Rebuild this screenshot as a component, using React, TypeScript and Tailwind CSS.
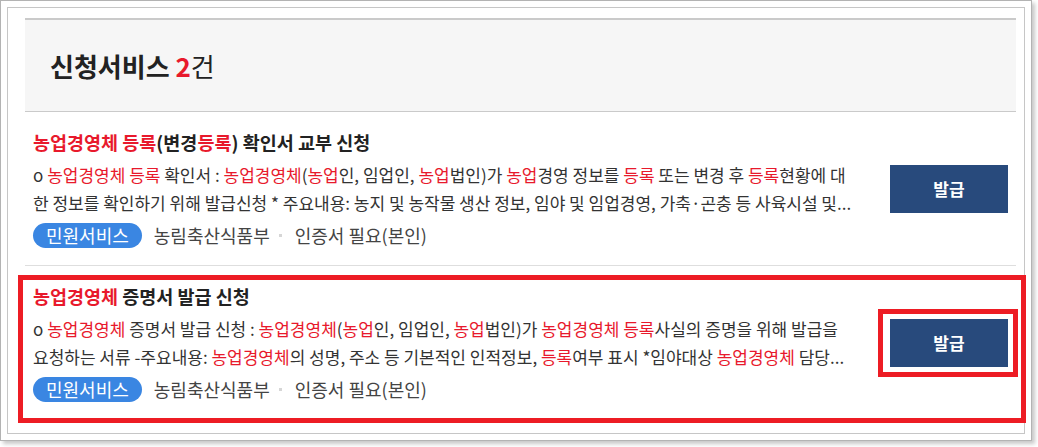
import React from 'react';

const font = { fontFamily: '"Noto Sans CJK KR", "Noto Sans", sans-serif' };

type Part = { t: string; red?: boolean };

function Rich({ parts }: { parts: Part[] }) {
  return (
    <>
      {parts.map((p, i) =>
        p.red ? (
          <span key={i} className="text-[#e8192c]">
            {p.t}
          </span>
        ) : (
          <span key={i}>{p.t}</span>
        )
      )}
    </>
  );
}

interface Service {
  id: number;
  title: Part[];
  lines: Part[][];
  highlighted?: boolean;
}

const services: Service[] = [
  {
    id: 1,
    title: [{ t: '농업경영체 등록', red: true }, { t: '(변경' }, { t: '등록', red: true }, { t: ') 확인서 교부 신청' }],
    lines: [
      [
        { t: 'o ' },
        { t: '농업경영체 등록', red: true },
        { t: ' 확인서 : ' },
        { t: '농업경영체', red: true },
        { t: '(' },
        { t: '농업', red: true },
        { t: '인, 임업인, ' },
        { t: '농업', red: true },
        { t: '법인)가 ' },
        { t: '농업', red: true },
        { t: '경영 정보를 ' },
        { t: '등록', red: true },
        { t: ' 또는 변경 후 ' },
        { t: '등록', red: true },
        { t: '현황에 대' },
      ],
      [{ t: '한 정보를 확인하기 위해 발급신청 * 주요내용: 농지 및 농작물 생산 정보, 임야 및 임업경영, 가축·곤충 등 사육시설 및...' }],
    ],
  },
  {
    id: 2,
    highlighted: true,
    title: [{ t: '농업경영체', red: true }, { t: ' 증명서 발급 신청' }],
    lines: [
      [
        { t: 'o ' },
        { t: '농업경영체', red: true },
        { t: ' 증명서 발급 신청 : ' },
        { t: '농업경영체', red: true },
        { t: '(' },
        { t: '농업', red: true },
        { t: '인, 임업인, ' },
        { t: '농업', red: true },
        { t: '법인)가 ' },
        { t: '농업경영체 등록', red: true },
        { t: '사실의 증명을 위해 발급을' },
      ],
      [
        { t: '요청하는 서류 -주요내용: ' },
        { t: '농업경영체', red: true },
        { t: '의 성명, 주소 등 기본적인 인적정보, ' },
        { t: '등록', red: true },
        { t: '여부 표시 *임야대상 ' },
        { t: '농업경영체', red: true },
        { t: ' 담당...' },
      ],
    ],
  },
];

function ServiceItem({ item, last }: { item: Service; last: boolean }) {
  return (
    <div className={`relative flex items-center h-[154px] pl-2 pr-2 ${last ? '' : 'border-b border-[#dedede]'}`}>
      {item.highlighted && (
        <div className="absolute -left-[7px] -right-[10px] top-[9px] h-[148px] border-[5px] border-[#ed1c24] pointer-events-none" />
      )}
      <div className="flex-1 min-w-0 pt-[1px]">
        <div className="text-[18.5px] leading-[24px] font-bold text-[#222] whitespace-nowrap">
          <Rich parts={item.title} />
        </div>
        <div className="mt-[7px] w-[836px] text-[17px] leading-[28px] text-[#333]">
          {item.lines.map((line, i) => (
            <div key={i} className="whitespace-nowrap overflow-hidden">
              <Rich parts={line} />
            </div>
          ))}
        </div>
        <div className="mt-[5px] flex items-center text-[18px] text-[#444]">
          <span className="h-[25px] leading-[25px] px-[13px] rounded-full bg-[#3a86e2] text-white">민원서비스</span>
          <span className="ml-3">농림축산식품부</span>
          <span className="ml-[9px] mr-[13px] w-[3px] h-[3px] bg-[#d6d6d6]" />
          <span>인증서 필요(본인)</span>
        </div>
      </div>
      <div className="relative shrink-0">
        {item.highlighted && (
          <div className="absolute -left-[12px] -right-[10px] -top-[10px] -bottom-[10px] border-[5px] border-[#ed1c24] pointer-events-none" />
        )}
        <button className="w-[118px] h-[48px] bg-[#284a7c] text-white text-[17px] font-bold">발급</button>
      </div>
    </div>
  );
}

export default function App() {
  return (
    <div className="w-[1038px] h-[447px] bg-white" style={font}>
      <div className="w-[1032px] h-[441px] border border-[#b3b3b3] p-[6px] shadow-[3px_3px_4px_rgba(0,0,0,0.22)]">
        <div className="w-[1018px] h-[427px] border border-[#c6c6c6]">
          <div className="ml-[17px] mt-[10px] w-[991px]">
            <div className="h-[94px] flex items-center pl-[25px] bg-[#f6f6f6] border-t-2 border-b border-[#cacaca]">
              <h2 className="text-[26px] font-bold text-[#222] leading-none">
                신청서비스 <span className="text-[#e8192c]">2</span>
                <span className="font-normal">건</span>
              </h2>
            </div>
            {services.map((s, i) => (
              <ServiceItem key={s.id} item={s} last={i === services.length - 1} />
            ))}
          </div>
        </div>
      </div>
    </div>
  );
}
